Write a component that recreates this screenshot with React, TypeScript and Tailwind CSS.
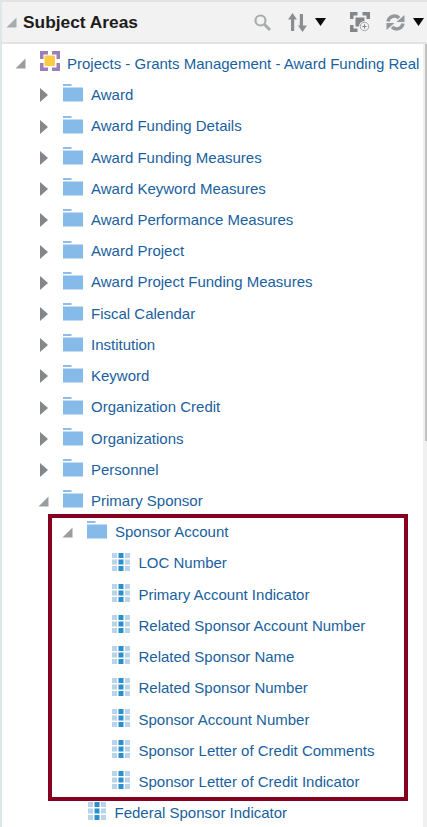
const font = "font-['Liberation_Sans',Arial,sans-serif]";

type Kind = "folder" | "column";
type Twisty = "open" | "closed" | "none";

type Row = {
  label: string;
  indent: number;
  kind: Kind;
  twisty: Twisty;
};

const rows: Row[] = [
  { label: "Award", indent: 0, kind: "folder", twisty: "closed" },
  { label: "Award Funding Details", indent: 0, kind: "folder", twisty: "closed" },
  { label: "Award Funding Measures", indent: 0, kind: "folder", twisty: "closed" },
  { label: "Award Keyword Measures", indent: 0, kind: "folder", twisty: "closed" },
  { label: "Award Performance Measures", indent: 0, kind: "folder", twisty: "closed" },
  { label: "Award Project", indent: 0, kind: "folder", twisty: "closed" },
  { label: "Award Project Funding Measures", indent: 0, kind: "folder", twisty: "closed" },
  { label: "Fiscal Calendar", indent: 0, kind: "folder", twisty: "closed" },
  { label: "Institution", indent: 0, kind: "folder", twisty: "closed" },
  { label: "Keyword", indent: 0, kind: "folder", twisty: "closed" },
  { label: "Organization Credit", indent: 0, kind: "folder", twisty: "closed" },
  { label: "Organizations", indent: 0, kind: "folder", twisty: "closed" },
  { label: "Personnel", indent: 0, kind: "folder", twisty: "closed" },
  { label: "Primary Sponsor", indent: 0, kind: "folder", twisty: "open" },
  { label: "Sponsor Account", indent: 24, kind: "folder", twisty: "open" },
  { label: "LOC Number", indent: 48, kind: "column", twisty: "none" },
  { label: "Primary Account Indicator", indent: 48, kind: "column", twisty: "none" },
  { label: "Related Sponsor Account Number", indent: 48, kind: "column", twisty: "none" },
  { label: "Related Sponsor Name", indent: 48, kind: "column", twisty: "none" },
  { label: "Related Sponsor Number", indent: 48, kind: "column", twisty: "none" },
  { label: "Sponsor Account Number", indent: 48, kind: "column", twisty: "none" },
  { label: "Sponsor Letter of Credit Comments", indent: 48, kind: "column", twisty: "none" },
  { label: "Sponsor Letter of Credit Indicator", indent: 48, kind: "column", twisty: "none" },
  { label: "Federal Sponsor Indicator", indent: 24, kind: "column", twisty: "none" },
];

function OpenArrow({ color = "#9a9da0" }: { color?: string }) {
  return (
    <svg width="11" height="11" viewBox="0 0 11 11">
      <path d="M10.500 0.500v10H0.500z" fill={color} />
    </svg>
  );
}

function ClosedArrow() {
  return (
    <svg width="8" height="14" viewBox="0 0 8 14">
      <path d="M0 0l8 7-8 7z" fill="#83878a" />
    </svg>
  );
}

function FolderIcon() {
  return (
    <svg width="20" height="18" viewBox="0 0 20 18">
      <rect x="0" y="0" width="8.500" height="2" fill="#8dbde8" />
      <rect x="0" y="3.500" width="20" height="14" fill="#85bae9" />
    </svg>
  );
}

function ColumnIcon() {
  const cells = [0, 6.5, 13];
  return (
    <svg width="18" height="18" viewBox="0 0 18 18">
      {cells.map((y) =>
        cells.map((x) => (
          <rect
            key={`${x}-${y}`}
            x={x}
            y={y}
            width="5"
            height="5"
            fill={x === 6.5 ? "#2b90cf" : "#b9d3e8"}
          />
        )),
      )}
    </svg>
  );
}

function SubjectAreaIcon() {
  return (
    <svg width="20" height="20" viewBox="0 0 20 20">
      <path
        d="M0 0h8v3.500H3.500V8H0zM12 0h8v8h-3.500V3.500H12zM0 12h3.500v4.500H8V20H0zM16.500 12H20v8h-8v-3.500h4.500z"
        fill="#9a7fb8"
      />
      <rect x="4.500" y="4.500" width="10.500" height="10.500" rx="1" fill="#fccb45" />
    </svg>
  );
}

function SearchIcon() {
  return (
    <svg width="17" height="17" viewBox="0 0 17 17" fill="none" stroke="#a9acae">
      <circle cx="6.500" cy="6.500" r="5" strokeWidth="2.200" />
      <path d="M10.500 10.500l5.500 5.500" strokeWidth="3" />
    </svg>
  );
}

function SortIcon() {
  return (
    <svg width="19" height="19" viewBox="0 0 19 19" fill="#8a8e91">
      <path d="M4.500 0L9 6.500H6.200V18H3V6.500H0zM11.800 1H15v11.500h4L14.500 19 10 12.500h1.800z" />
    </svg>
  );
}

function CaretDown() {
  return (
    <svg width="11" height="8" viewBox="0 0 11 8">
      <path d="M0 0h11L5.500 8z" fill="#0b0b0b" />
    </svg>
  );
}

function AddFrameIcon() {
  return (
    <svg width="20" height="20" viewBox="0 0 20 20">
      <path
        d="M0 0h7.500v3.500H3.500V7H0zM12.500 0H20v7h-3.500V3.500h-4zM0 13h3.500v3.500h4V20H0z"
        fill="#83878a"
      />
      <rect x="5.500" y="5.500" width="9" height="9" fill="#83878a" />
      <circle cx="14.500" cy="14.500" r="5.500" fill="#f2f2f2" />
      <circle cx="14.500" cy="14.500" r="4.200" fill="none" stroke="#a3a6a8" />
      <path d="M14.500 12.300v4.400M12.300 14.500h4.400" stroke="#83878a" />
    </svg>
  );
}

function RefreshIcon() {
  return (
    <svg width="19" height="17" viewBox="0 0 19 17" fill="none" stroke="#95989b" strokeWidth="3.500">
      <path d="M2 7.500a6.500 6.500 0 0 1 11-3.500" />
      <path d="M17 9.500a6.500 6.500 0 0 1-11 3.500" />
      <path d="M10.500 8h8V1z" fill="#95989b" stroke="none" />
      <path d="M8.500 9h-8v7z" fill="#95989b" stroke="none" />
    </svg>
  );
}

function TreeRow({ row }: { row: Row }) {
  return (
    <div className="flex h-[31.23px] items-center" style={{ paddingLeft: row.indent }}>
      <span className="flex w-[34px] shrink-0 items-center">
        {row.twisty === "open" && (
          <span className="ml-[9px] flex">
            <OpenArrow />
          </span>
        )}
        {row.twisty === "closed" && (
          <span className="ml-[11px] flex">
            <ClosedArrow />
          </span>
        )}
      </span>
      {row.kind === "folder" ? (
        <span className="-mt-1 mr-[8px] flex shrink-0">
          <FolderIcon />
        </span>
      ) : (
        <span className="-mt-1 mr-[8.5px] ml-px flex shrink-0">
          <ColumnIcon />
        </span>
      )}
      <span className="text-[15px] whitespace-nowrap text-[#1a5f9e]">{row.label}</span>
    </div>
  );
}

export default function App() {
  return (
    <div className={`${font} h-[827px] w-[427px] overflow-hidden border-l-2 border-[#dfe5ea] bg-white`}>
      <header className="flex h-[44px] items-center border-y-2 border-[#e3e3e3] bg-[#f2f2f2]">
        <span className="ml-[4px] flex">
          <OpenArrow color="#a9abad" />
        </span>
        <h1 className="mt-px ml-[6px] text-[17.33px] font-bold text-[#1c1c1c]">Subject Areas</h1>
        <div className="ml-auto flex items-center pr-[3px]">
          <SearchIcon />
          <span className="ml-[17px] flex">
            <SortIcon />
          </span>
          <span className="ml-[8px] flex">
            <CaretDown />
          </span>
          <span className="ml-[24px] flex">
            <AddFrameIcon />
          </span>
          <span className="ml-[16px] flex">
            <RefreshIcon />
          </span>
          <span className="ml-[8px] flex">
            <CaretDown />
          </span>
        </div>
      </header>

      <main className="relative flex">
        <div className="min-w-0 flex-1 pt-[4px]">
          <div className="flex h-[31.8px] items-center">
            <span className="ml-[13px] flex w-[25px] shrink-0">
              <OpenArrow />
            </span>
            <span className="mt-[-6px] mr-[7px] flex shrink-0">
              <SubjectAreaIcon />
            </span>
            <span className="text-[15px] whitespace-nowrap text-[#1a5f9e]">
              Projects - Grants Management - Award Funding Real
            </span>
          </div>
          <div className="pl-[27px]">
            {rows.map((row) => (
              <TreeRow key={row.label} row={row} />
            ))}
          </div>
        </div>

        {/* scrollbar */}
        <div className="h-[783px] w-[4px] shrink-0 bg-[#f0f0f0]">
          <div className="ml-[2px] h-[397px] bg-[#c1c1c1]" />
        </div>

        {/* annotation box drawn over the tree */}
        <div className="pointer-events-none absolute top-[470px] left-[46px] h-[287px] w-[360px] border-4 border-[#860020]" />
      </main>
    </div>
  );
}
